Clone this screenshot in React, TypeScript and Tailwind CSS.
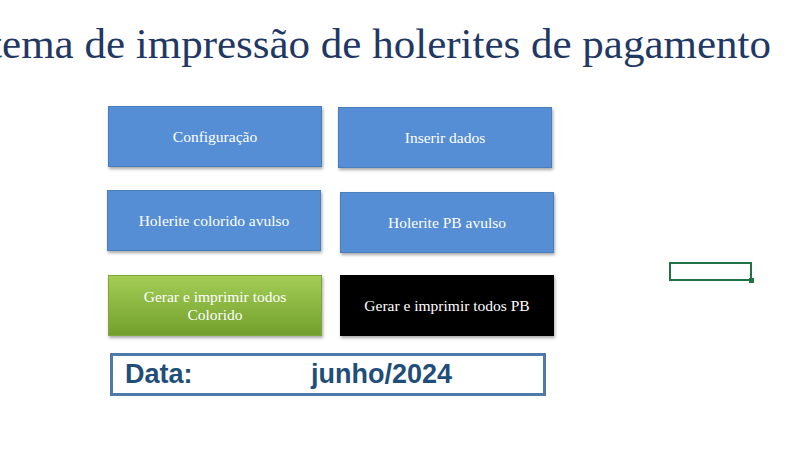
export default function App() {
  const btn =
    "flex h-[61px] w-[214px] items-center justify-center border border-[#4a7ebb] bg-[#558ed5] px-3 text-center text-[15.5px] leading-[18px] text-white shadow-[1px_2px_3px_rgba(0,0,0,0.35)]";

  return (
    <div className="relative h-[451px] w-[788px] overflow-hidden bg-white font-['Liberation_Serif',serif]">
      <div className="flex h-[84px] items-center justify-end pr-[17px] pt-[3px]">
        <h1 className="whitespace-nowrap text-[43px] leading-none text-[#1f3864]">
          Sistema de impressão de holerites de pagamento
        </h1>
      </div>

      <div className="ml-[107px] mt-[22px] flex w-[447px] flex-col">
        <div className="flex justify-between">
          <div className={`${btn} ml-[1px]`}>Configuração</div>
          <div className={`${btn} mr-[2px] mt-[1px]`}>Inserir dados</div>
        </div>
        <div className="mt-[22px] flex justify-between">
          <div className={btn}>Holerite colorido avulso</div>
          <div className={`${btn} mt-[2px]`}>Holerite PB avulso</div>
        </div>
        <div className="mt-[22px] flex justify-between">
          <div
            className={`${btn} ml-[1px] border-[#7fa63a] bg-gradient-to-b from-[#a3cd55] to-[#73a02c]`}
          >
            Gerar e imprimir todos
            <br />
            Colorido
          </div>
          <div className={`${btn} border-black bg-black`}>Gerar e imprimir todos PB</div>
        </div>
        <div className="ml-[3px] mt-[17px] flex h-[43px] w-[436px] items-center border-[3px] border-[#4f79a8] pl-[12px] font-['Liberation_Sans',sans-serif] text-[27px] font-bold text-[#1f4e79]">
          <span className="w-[186px]">Data:</span>
          <span>junho/2024</span>
        </div>
      </div>

      <div className="absolute left-[669px] top-[262px] h-[19px] w-[83px] border-2 border-[#217346]">
        <div className="absolute -bottom-[4px] -right-[4px] h-[5px] w-[5px] bg-[#217346]" />
      </div>
    </div>
  );
}
